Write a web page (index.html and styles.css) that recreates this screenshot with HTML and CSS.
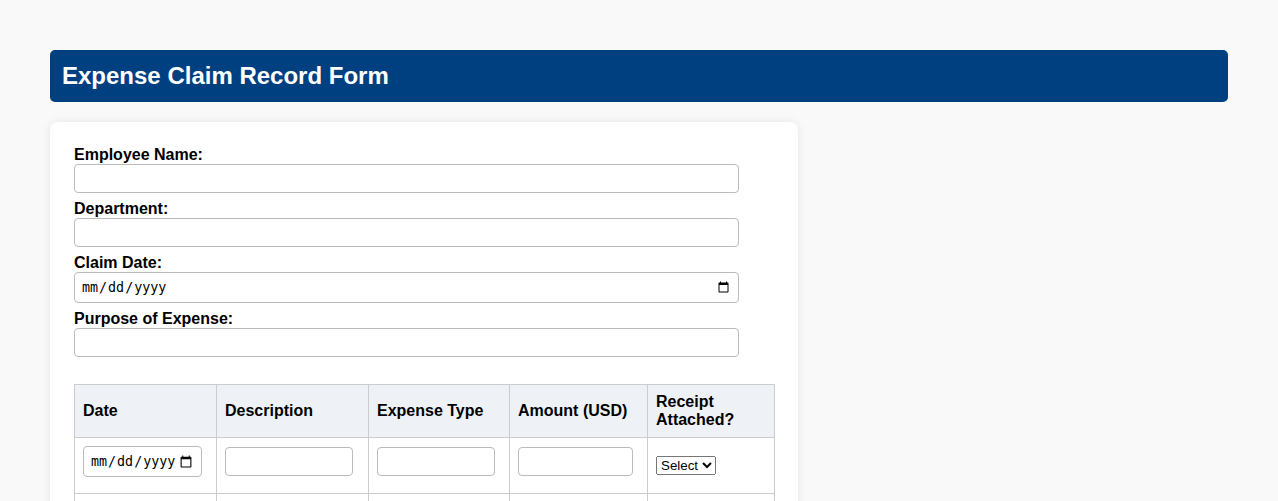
FILE: index.html
```html
<!DOCTYPE html>
<html lang="en">
<head>
  <meta charset="UTF-8">
  <title>Expense Claim Record Form</title>
  <meta name="viewport" content="width=device-width, initial-scale=1.0">
  <link rel="stylesheet" href="styles.css">
</head>
<body>

<h1>Expense Claim Record Form</h1>

<div class="card">
  <label for="empName">Employee Name:</label>
  <input type="text" id="empName">

  <label for="dept">Department:</label>
  <input type="text" id="dept">

  <label for="claimDate">Claim Date:</label>
  <input type="date" id="claimDate">

  <label for="purpose">Purpose of Expense:</label>
  <input type="text" id="purpose">

  <table>
    <colgroup>
      <col class="col-date">
      <col class="col-desc">
      <col class="col-type">
      <col class="col-amount">
      <col class="col-receipt">
    </colgroup>
    <thead>
      <tr>
        <th>Date</th>
        <th>Description</th>
        <th>Expense Type</th>
        <th>Amount (USD)</th>
        <th>Receipt Attached?</th>
      </tr>
    </thead>
    <tbody>
      <tr>
        <td><input type="date"></td>
        <td><input type="text"></td>
        <td><input type="text"></td>
        <td><input type="number"></td>
        <td>
          <select>
            <option>Select</option>
            <option>Yes</option>
            <option>No</option>
          </select>
        </td>
      </tr>
      <tr>
        <td><input type="date"></td>
        <td><input type="text"></td>
        <td><input type="text"></td>
        <td><input type="number"></td>
        <td>
          <select>
            <option>Select</option>
            <option>Yes</option>
            <option>No</option>
          </select>
        </td>
      </tr>
    </tbody>
  </table>
</div>

</body>
</html>
```

FILE: styles.css
```css
:root {
  --primary: #004080;
  --bg-light: #f9f9f9;
  --box-bg: #ffffff;
  --line: #cccccc;
  --head-bg: #eef2f7;
}

body {
  font-family: 'Liberation Sans', Arial, sans-serif;
  background-color: var(--bg-light);
  margin: 0;
  padding: 50px;
  color: #000;
}

h1 {
  background-color: var(--primary);
  color: white;
  font-size: 24px;
  margin: 0 0 20px;
  padding: 12px;
  border-radius: 5px;
}

.card {
  background: var(--box-bg);
  width: 700px;
  padding: 24px;
  border-radius: 8px;
  box-shadow: 0 0 10px rgba(0, 0, 0, 0.08);
}

label {
  display: block;
  font-weight: bold;
  font-size: 16px;
}

input {
  width: 95%;
  padding: 6px;
  margin: 0 0 7px;
  border: 1px solid #bbb;
  border-radius: 4px;
  font-size: 13.33px;
  box-sizing: border-box;
}

input[type="text"], input[type="number"] {
  height: 29px;
}

input[type="date"] {
  height: 31px;
}

table {
  width: 100%;
  table-layout: fixed;
  border-collapse: collapse;
  margin-top: 20px;
}

.col-date { width: 142px; }
.col-desc { width: 152px; }
.col-type { width: 141px; }
.col-amount { width: 138px; }
.col-receipt { width: 127px; }

th, td {
  border: 1px solid var(--line);
  padding: 8px;
  text-align: left;
  font-size: 16px;
}

th {
  background: var(--head-bg);
}

td input {
  display: block;
  margin-bottom: 8px;
}

select {
  font-size: 13.33px;
}
```
